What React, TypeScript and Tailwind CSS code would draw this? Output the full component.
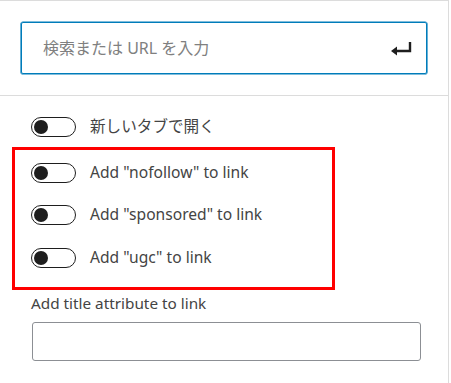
import React from "react";

const font = { fontFamily: '"Noto Sans", "Noto Sans CJK JP", sans-serif' };

function Toggle() {
  return (
    <div className="relative w-[45px] h-[20px] rounded-full border-[1.5px] border-[#1e1e1e] bg-white shrink-0">
      <div className="absolute left-[2px] top-[1.5px] w-[14px] h-[14px] rounded-full bg-[#1e1e1e]" />
    </div>
  );
}

function Row({ label, className = "" }: { label: string; className?: string }) {
  return (
    <div className={"flex items-center gap-[14px] h-[20px] " + className}>
      <Toggle />
      <span className="text-[15.6px] text-[#444444] leading-none whitespace-nowrap">{label}</span>
    </div>
  );
}

export default function App() {
  return (
    <div className="w-[451px] h-[383px] bg-white relative overflow-hidden" style={font}>
      <div className="w-[449px] h-[383px] border-t border-r border-[#dcdcdc]">
        <div className="px-[21px] pt-[21px] pb-[21px] border-b border-[#dcdcdc]">
          <div className="h-[52px] rounded-[2px] border border-[#007cba] shadow-[0_0_0_0.6px_#007cba] flex items-center pl-[21px] pr-[14px]">
            <span className="flex-1 text-[16px] text-[#808080] leading-none">検索または URL を入力</span>
            <svg width="22" height="16" viewBox="0 0 22 16">
              <path d="M20 2 V11 H6" fill="none" stroke="#1e1e1e" strokeWidth="2.4" />
              <polygon points="1,11 7,6.5 7,15.5" fill="#1e1e1e" />
            </svg>
          </div>
        </div>
        <div className="pl-[31px] pr-[27px] pt-[21px]">
          <Row label="新しいタブで開く" />
          <Row label={'Add "nofollow" to link'} className="mt-[26px]" />
          <Row label={'Add "sponsored" to link'} className="mt-[22px]" />
          <Row label={'Add "ugc" to link'} className="mt-[23px]" />
          <div className="mt-[28px] text-[15.3px] text-[#444444] leading-none">Add title attribute to link</div>
          <div className="mt-[11px] ml-[1px] w-[389px] h-[39px] rounded-[3px] border border-[#8c8f94]" />
        </div>
      </div>
      <div className="absolute left-[12px] top-[147px] w-[323px] h-[143px] border-[3px] border-[#ff0000]" />
    </div>
  );
}
